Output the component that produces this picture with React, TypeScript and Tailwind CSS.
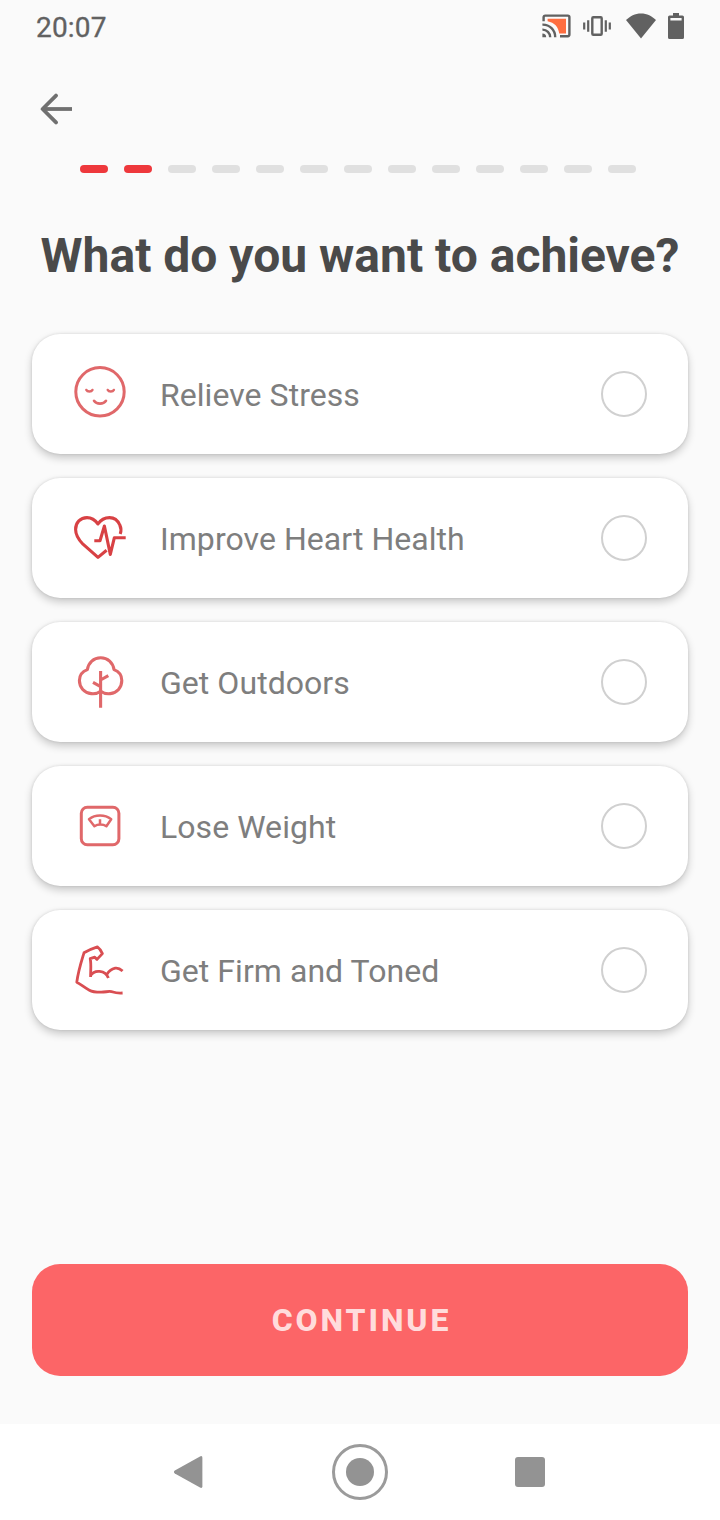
import React, { useState } from 'react';
import { clsx } from 'clsx';

const TOTAL_STEPS = 13;
const CURRENT_STEP = 2;

type IconProps = { children: React.ReactNode; color?: string; width?: number };

// Shared frame for the goal icons
const GoalIcon = ({ children, color = '#e0686a', width = 3 }: IconProps) => (
  <svg
    className="size-14 shrink-0"
    viewBox="0 0 56 56"
    fill="none"
    stroke={color}
    strokeWidth={width}
    strokeLinejoin="round"
  >
    {children}
  </svg>
);

const FaceIcon = () => (
  <GoalIcon>
    <circle cx="28" cy="25.8" r="24.2" />
    <g strokeWidth="2.6" strokeLinecap="round">
      <path d="M14.4 24C15.4 26 19.4 26 20.4 24" />
      <path d="M35.8 24C36.8 26 40.8 26 41.8 24" />
      <path d="M22 34.8C24.6 38.6 31.4 38.6 34 34.8" />
    </g>
  </GoalIcon>
);

const HeartIcon = () => (
  <GoalIcon color="#d84144" width={3.1}>
    <path d="M48.2 24C49.2 21.6 49.2 18 47.8 15C45.6 10 41.6 7.6 37.6 7.6C32.6 7.6 28.6 10 26 14C23.2 10 19.4 7.6 15 7.6C8.4 7.6 3.6 12.6 3.6 19.4C3.6 25.4 7 30 11 34.2L26 47.4L34.6 40.2" />
    <path d="M22.3 30.7H28L32.4 16L38.3 44.4L42.3 27.8H53.7" />
  </GoalIcon>
);

const TreeIcon = () => (
  <GoalIcon width={3.1}>
    <path d="M28.7 37.2C25.6 39.4 22.4 40 19.2 39.6C12.4 39 7.4 33.4 7.4 26.6C7.4 21.6 10.4 17.4 15.4 15.6C16.4 8.6 21.6 3.8 28.7 3.8S41 8.6 42 15.6C47 17.4 49.8 21.6 49.8 26.6C49.8 33.4 45 39 38.2 39.6C35 40 31.8 39.4 28.7 37.2Z" />
    <path d="M28.6 17V53.8M28.6 26L36.3 21.6M21 28.4L28.6 32.6" />
  </GoalIcon>
);

const ScaleIcon = () => (
  <GoalIcon>
    <rect x="9.3" y="9.2" width="37.6" height="37.6" rx="6" />
    <path
      d="M17 21.2C23 16.2 33 16.2 39.2 21.2L34.4 28.2C31 26 25.8 26 22.4 28.2ZM28 21.2V26.2"
      strokeWidth="2.5"
    />
  </GoalIcon>
);

const ArmIcon = () => (
  <GoalIcon color="#d94e52" width={2.8}>
    <path
      strokeLinecap="butt"
      d="M50.6 51C46.5 51.2 43.5 51 41 50C37 48.4 34 50.4 28.6 50.2C24 50.2 20.5 50 17.4 48.2C12 45.4 9 42.4 4.8 40.2C6.2 29 9.2 20 12 10.8C16.4 8 21 6.2 25.4 4.8C27.8 6.4 29.2 9 30.4 11.6L25 17.4L22.8 15.2L18.2 16.6C19.4 22 18.6 28 18.6 35M18.6 33.6C20.6 30.4 24 29 27.6 29.4C32 29.8 35 32 36.4 36M34.8 32.6C36.6 29.4 39.4 27 43.2 26.2C46.4 25.6 48.6 27.2 50.6 29"
    />
  </GoalIcon>
);

const goals = [
  { id: 'stress', label: 'Relieve Stress', icon: FaceIcon },
  { id: 'heart', label: 'Improve Heart Health', icon: HeartIcon },
  { id: 'outdoors', label: 'Get Outdoors', icon: TreeIcon },
  { id: 'weight', label: 'Lose Weight', icon: ScaleIcon },
  { id: 'toned', label: 'Get Firm and Toned', icon: ArmIcon },
];

const StatusBar = () => (
  <div className="flex h-[54px] items-center justify-between px-9 text-[#616161]">
    <span className="pt-[2px] text-[28px] leading-none tracking-[0.2px] [-webkit-text-stroke:0.3px]">20:07</span>
    <div className="flex items-center pb-[2px]">
      {/* Cast */}
      <svg className="mr-3 h-6 w-[29px]" viewBox="0 0 29 24" fill="none">
        <path d="M5.6 4.8H24V19.6H17.2C16.4 12.6 12.4 8.6 5.6 7.2Z" fill="#ff6e40" />
        <g stroke="currentColor" strokeWidth="2.4">
          <path d="M1.6 7.2V3.2Q1.6 1.6 3.2 1.6H25.8Q27.4 1.6 27.4 3.2V20.6Q27.4 22.2 25.8 22.2H18" />
          <path d="M.4 10.6A12.4 12.4 0 0 1 13.2 23.3M.4 15.6A7.6 7.6 0 0 1 8.2 23.3" />
        </g>
        <path d="M.4 19.6A3.8 3.8 0 0 1 4.2 23.3H.4Z" fill="currentColor" />
      </svg>
      {/* Vibrate */}
      <svg className="mr-[15px] h-6 w-7" viewBox="0 0 28 24" fill="none" stroke="currentColor">
        <rect x="9.3" y="3.2" width="9.4" height="17.6" rx="1" strokeWidth="2.4" />
        <path d="M5.2 6.2V17.8M22.8 6.2V17.8M1.2 8.6V15.4M26.8 8.6V15.4" strokeWidth="2.2" />
      </svg>
      {/* Wifi */}
      <svg className="mr-3 h-[26px] w-[30px]" viewBox="0 0 30 26" fill="currentColor">
        <path d="M15 25.5L0 7C4 3 9 .4 15 .4S26 3 30 7Z" />
      </svg>
      {/* Battery */}
      <svg className="h-[26px] w-4" viewBox="0 0 16 26" fill="currentColor">
        <path
          fillRule="evenodd"
          d="M5 0H11V2.4H14.4Q16 2.4 16 4V24.4Q16 26 14.4 26H1.6Q0 26 0 24.4V4Q0 2.4 1.6 2.4H5ZM2.4 5V7.6H13.6V5Z"
        />
      </svg>
    </div>
  </div>
);

const NavigationBar = () => (
  <div className="flex h-24 items-center justify-between bg-white pl-[173px] pr-[175px] text-[#939393]">
    <svg className="h-8 w-[30px]" viewBox="0 0 30 32" fill="currentColor">
      <path d="M1.8 14.4L27 .4Q29.4-.6 29.4 1.8V30.2Q29.4 32.6 27 31.6L1.8 17.6Q0 16 1.8 14.4Z" />
    </svg>
    <div className="ml-px flex size-14 items-center justify-center rounded-full border-[3px] border-[#9b9b9b]">
      <div className="size-7 rounded-full bg-[#939393]" />
    </div>
    <div className="size-[30px] rounded-[3px] bg-[#939393]" />
  </div>
);

const App = () => {
  const [selected, setSelected] = useState<string[]>([]);

  const toggleGoal = (id: string) => {
    setSelected(current => (current.includes(id) ? current.filter(g => g !== id) : [...current, id]));
  };

  return (
    <div className="flex h-[1520px] w-[720px] flex-col overflow-hidden bg-[#fafafa] font-[Roboto,sans-serif]">
      <StatusBar />

      <button className="ml-10 mt-[38px] h-[34px] w-8 text-[#707070]" aria-label="Back">
        <svg
          className="h-[34px] w-8"
          viewBox="0 0 32 34"
          fill="none"
          stroke="currentColor"
          strokeWidth="3.8"
          strokeLinecap="round"
          strokeLinejoin="round"
        >
          <path d="M16 3.6L2.6 17L16 30.4" />
          <path d="M3 17H32" strokeLinecap="butt" />
        </svg>
      </button>

      <div className="mt-[39px] flex gap-4 pl-20">
        {Array.from({ length: TOTAL_STEPS }, (_, i) => (
          <div
            key={i}
            className={clsx('h-2 w-7 rounded-full', i < CURRENT_STEP ? 'bg-[#ee383c]' : 'bg-[#e0e0e0]')}
          />
        ))}
      </div>

      <h1 className="mt-[55px] whitespace-nowrap text-center text-[48px] font-bold leading-[56px] text-[#4a4a4a]">
        What do you want to achieve?
      </h1>

      <div className="mt-[50px] flex flex-col gap-6 px-8">
        {goals.map(({ id, label, icon: Icon }) => (
          <button
            key={id}
            onClick={() => toggleGoal(id)}
            className="flex h-[120px] items-center rounded-[28px] bg-white pl-10 pr-[41px] text-left shadow-[0_4px_8px_rgba(0,0,0,0.2),0_0_3px_rgba(0,0,0,0.12)]"
          >
            <Icon />
            <span className="ml-8 flex-1 pt-[2px] text-[32px] leading-10 tracking-[0.05px] text-[#7e7e7e]">{label}</span>
            <span
              className={clsx(
                'size-[46px] rounded-full border-2 border-[#d0d0d0]',
                selected.includes(id) && 'bg-[#ee383c]'
              )}
            />
          </button>
        ))}
      </div>

      <div className="mt-auto px-8 pb-12">
        <button className="h-28 w-full rounded-[28px] bg-[#fc6567] pl-[3px] text-[32px] font-extrabold tracking-[2.9px] text-[#ffdcdc]">
          CONTINUE
        </button>
      </div>

      <NavigationBar />
    </div>
  );
};

export default App;
